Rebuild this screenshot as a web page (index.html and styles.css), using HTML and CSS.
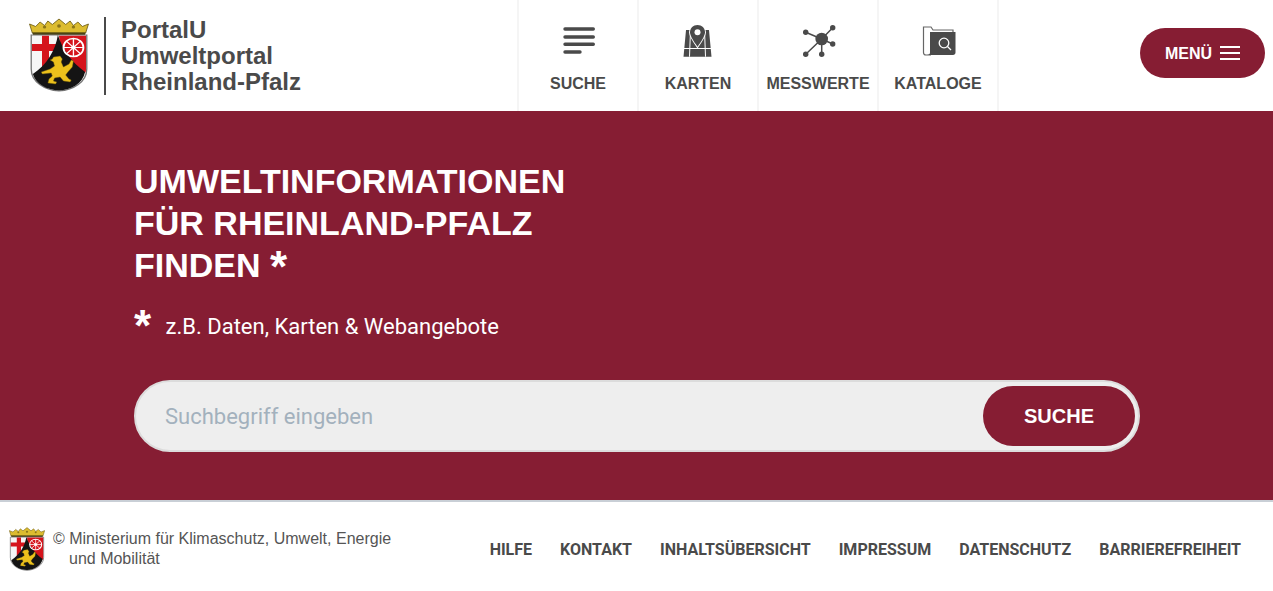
FILE: index.html
```html
<!DOCTYPE html>
<html lang="de">
<head>
  <meta charset="utf-8">
  <title>PortalU Umweltportal Rheinland-Pfalz</title>
  <link rel="stylesheet" href="styles.css">
</head>
<body>
  <svg class="defs" width="0" height="0" aria-hidden="true">
    <symbol id="wappen" viewBox="3 0 54 74" preserveAspectRatio="none">
      <!-- krone -->
      <path d="M6 15L3.500 6 9 8.500 13 4 17 7.500 20 3 24 6.500 30 1 36 6.500 40 3 43 7.500 47 4 51 8.500 56.500 6 54 15z" fill="#dcbc30" stroke="#6b5a12" stroke-width=".8"/>
      <circle cx="17" cy="9" r="1.500" fill="#8a7418"/>
      <circle cx="30" cy="8" r="1.700" fill="#8a7418"/>
      <circle cx="43" cy="9" r="1.500" fill="#8a7418"/>
      <path d="M6 14.500h48l-.6 2.500H6.600z" fill="#4a4312"/>
      <!-- schild -->
      <path d="M5 17h50v34c0 13-12 21-25 22C17 72 5 64 5 51z" fill="#f6f6f6" stroke="#777" stroke-width="1.200"/>
      <path d="M30 17.700h24.300V51c0 1.500-.2 2.500-.5 3.500H34z" fill="#d5141c"/>
      <path d="M14.700 17.700H21v33h-6.300zM5.700 26H29v7H5.700z" fill="#d5141c"/>
      <path d="M29 17c-2 15-10 30-22.500 39C9 66 19 72 30 72.500 41 72 51 66 53.500 54 41 44 33 31 29 17z" fill="#141414"/>
      <!-- rad -->
      <circle cx="43" cy="29.500" r="9" fill="none" stroke="#fff" stroke-width="1.600"/>
      <circle cx="43" cy="29.500" r="2" fill="#fff"/>
      <path d="M43 20.500v18M34 29.500h18M36.600 23.100l12.800 12.800M49.400 23.100L36.600 35.900" stroke="#fff" stroke-width="1.200"/>
      <!-- loewe -->
      <path d="M25 39l6-1 2 3-1 3 2 5 5-3 2-4 2 1-1 6-4 5-2 3 3 4 2 1-1 2-6-1-3-4-5 1-1 3 3 1-1 2-7-1 1-4 3-3-1-3-8 1-1-2 8-3 4-3-1-4-3-2 2-1z" fill="#ecc11c" stroke="#6b5708" stroke-width=".4"/>
    </symbol>
  </svg>

  <header class="site-header">
    <a class="logo" href="#">
      <svg class="logo-arms"><use href="#wappen"/></svg>
      <span class="logo-text">PortalU<br>Umweltportal<br>Rheinland-Pfalz</span>
    </a>

    <nav class="main-nav">
      <a class="nav-item" href="#">
        <svg class="nav-icon" viewBox="0 0 36 36">
          <path d="M5 5h28.300M5 13h28.300M5 20.300h28.300M5 28h15" fill="none" stroke="#4a4a4a" stroke-width="3.400" stroke-linecap="round"/>
        </svg>
        <span>SUCHE</span>
      </a>
      <a class="nav-item" href="#">
        <svg class="nav-icon" viewBox="0 0 36 36">
          <path d="M6 6h23l2.500 26.700h-28z" fill="#4a4a4a"/>
          <path d="M10.500 6l-1 26.700M24.500 6l1 26.700M3 24.500h29" fill="none" stroke="#fff" stroke-width="1"/>
          <path d="M17.500 1c-4.400 0-7.500 3.200-7.500 7.200 0 3.700 4 9.500 7.500 14.500 3.500-5 7.500-10.800 7.500-14.500C25 4.200 21.900 1 17.500 1z" fill="#4a4a4a" stroke="#fff" stroke-width="2" paint-order="stroke"/>
          <circle cx="17.500" cy="8.200" r="3" fill="#fff"/>
        </svg>
        <span>KARTEN</span>
      </a>
      <a class="nav-item" href="#">
        <svg class="nav-icon" viewBox="0 0 36 36">
          <path d="M21.700 15L5.700 8.300M21.700 15L32.700 3.700M21.700 15L32.700 20M21.700 15V30.300M21.700 15L5.700 30.300" stroke="#4a4a4a" stroke-width="1.500"/>
          <circle cx="21.700" cy="15" r="6.300" fill="#4a4a4a"/>
          <circle cx="5.700" cy="8.300" r="2.700" fill="#4a4a4a"/>
          <circle cx="32.700" cy="3.700" r="2.700" fill="#4a4a4a"/>
          <circle cx="32.700" cy="20" r="2.700" fill="#4a4a4a"/>
          <circle cx="21.700" cy="30.300" r="2.700" fill="#4a4a4a"/>
          <circle cx="5.700" cy="30.300" r="2.700" fill="#4a4a4a"/>
        </svg>
        <span>MESSWERTE</span>
      </a>
      <a class="nav-item" href="#">
        <svg class="nav-icon" viewBox="0 0 36 36">
          <path d="M33 8V6H13l-2-3H3.500v25.500c0 1.500 1 2.500 2.500 2.500h5" fill="none" stroke="#666" stroke-width="1.200"/>
          <path d="M10 8h25.500v20.500c0 1.500-1 2.500-2.500 2.500H7c2 0 3-1 3-2.500z" fill="#4a4a4a"/>
          <circle cx="24" cy="19" r="4.800" fill="none" stroke="#fff" stroke-width="1.300"/>
          <path d="M27.500 22.500l3.500 3.500" stroke="#fff" stroke-width="1.300"/>
        </svg>
        <span>KATALOGE</span>
      </a>
    </nav>

    <button class="menu-btn" type="button">
      <span class="menu-label">MENÜ</span>
      <span class="burger"><i></i><i></i><i></i></span>
    </button>
  </header>

  <main class="hero">
    <h1 class="hero-title">UMWELTINFORMATIONEN<br>FÜR RHEINLAND-PFALZ<br>FINDEN <span class="star">*</span></h1>
    <p class="hero-sub"><span class="star">*</span> z.B. Daten, Karten &amp; Webangebote</p>
    <form class="search-box">
      <input class="search-input" type="text" placeholder="Suchbegriff eingeben">
      <button class="search-btn" type="button">SUCHE</button>
    </form>
  </main>

  <footer class="site-footer">
    <div class="copyright">
      <svg class="footer-arms"><use href="#wappen"/></svg>
      <p>© Ministerium für Klimaschutz, Umwelt, Energie<br><span class="indent">und Mobilität</span></p>
    </div>
    <nav class="footer-nav">
      <a href="#">Hilfe</a>
      <a href="#">Kontakt</a>
      <a href="#">Inhaltsübersicht</a>
      <a href="#">Impressum</a>
      <a href="#">Datenschutz</a>
      <a href="#">Barrierefreiheit</a>
    </nav>
  </footer>
</body>
</html>
```

FILE: styles.css
```css
/* Grundlayout */
html, body {
  margin: 0;
  padding: 0;
}

body {
  font-family: "Liberation Sans", Arial, sans-serif;
  color: #4a4a4a;
  background: #fff;
}

a {
  color: inherit;
  text-decoration: none;
}

.defs {
  position: absolute;
}

/* Kopfzeile */
.site-header {
  display: flex;
  align-items: stretch;
  height: 111px;
  padding: 0 8px 0 29px;
}

.logo {
  display: flex;
  align-items: center;
  width: 488px;
  flex: none;
}

.logo-arms {
  width: 60px;
  height: 74px;
  margin-top: -1px;
}

.logo-text {
  margin-left: 15px;
  padding-left: 15px;
  border-left: 2px solid #4a4a4a;
  font-size: 24px;
  font-weight: bold;
  line-height: 26px;
}

.main-nav {
  display: flex;
  border-left: 2px solid #f5f5f5;
}

.nav-item {
  display: flex;
  flex-direction: column;
  align-items: center;
  width: 118px;
  padding-top: 24px;
  border-right: 2px solid #f5f5f5;
  font-size: 16px;
  font-weight: bold;
}

.nav-icon {
  width: 36px;
  height: 36px;
  margin-bottom: 15px;
}

.menu-btn {
  display: flex;
  align-items: center;
  justify-content: center;
  gap: 8px;
  width: 125px;
  height: 50px;
  margin: 28px 0 0 auto;
  border: none;
  border-radius: 25px;
  background: #861d33;
  color: #fff;
  font-family: inherit;
  font-size: 16px;
  font-weight: bold;
}

.menu-label {
  padding-top: 2px;
}

.burger {
  display: flex;
  flex-direction: column;
  gap: 4px;
  width: 20px;
}

.burger i {
  display: block;
  height: 2px;
  background: #fff;
}

/* Suchbereich */
.hero {
  height: 389px;
  padding: 49px 133px 0 134px;
  box-sizing: border-box;
  background: #861d33;
  color: #fff;
}

.hero-title {
  margin: 0;
  font-size: 34px;
  font-weight: bold;
  line-height: 42px;
}

.star {
  font-size: 44px;
  line-height: 20px;
  font-weight: bold;
  vertical-align: -5px;
}

.hero-sub {
  margin: 26px 0 0;
  font-family: Roboto, sans-serif;
  font-size: 22px;
  line-height: 30px;
}

.hero-sub .star {
  margin-right: 9px;
  font-family: "Liberation Sans", sans-serif;
  vertical-align: -7px;
}

.search-box {
  display: flex;
  align-items: center;
  height: 72px;
  margin-top: 38px;
  padding: 0 3px 0 29px;
  box-sizing: border-box;
  border: 2px solid #dcdcdc;
  border-radius: 36px;
  background: #eee;
}

.search-input {
  flex: 1;
  padding: 0;
  border: none;
  outline: none;
  background: transparent;
  font-family: Roboto, sans-serif;
  font-size: 22px;
  color: #4a4a4a;
}

.search-input::placeholder {
  color: #a3b1bd;
  opacity: 1;
}

.search-btn {
  width: 152px;
  height: 60px;
  border: none;
  border-radius: 30px;
  background: #861d33;
  color: #fff;
  font-family: inherit;
  font-size: 20px;
  font-weight: bold;
}

/* Fusszeile */
.site-footer {
  display: flex;
  align-items: center;
  justify-content: space-between;
  height: 91px;
  padding: 5px 32px 0 9px;
  box-sizing: border-box;
  border-top: 2px solid #c9cfd6;
}

.copyright {
  display: flex;
  align-items: center;
  gap: 8px;
}

.footer-arms {
  width: 36px;
  height: 44px;
}

.copyright p {
  margin: 0;
  font-size: 16px;
  line-height: 20px;
  color: #555;
}

.indent {
  margin-left: 16px;
}

.footer-nav {
  display: flex;
  gap: 28px;
  font-family: Roboto, sans-serif;
  font-size: 16px;
  font-weight: 700;
  text-transform: uppercase;
}
```
